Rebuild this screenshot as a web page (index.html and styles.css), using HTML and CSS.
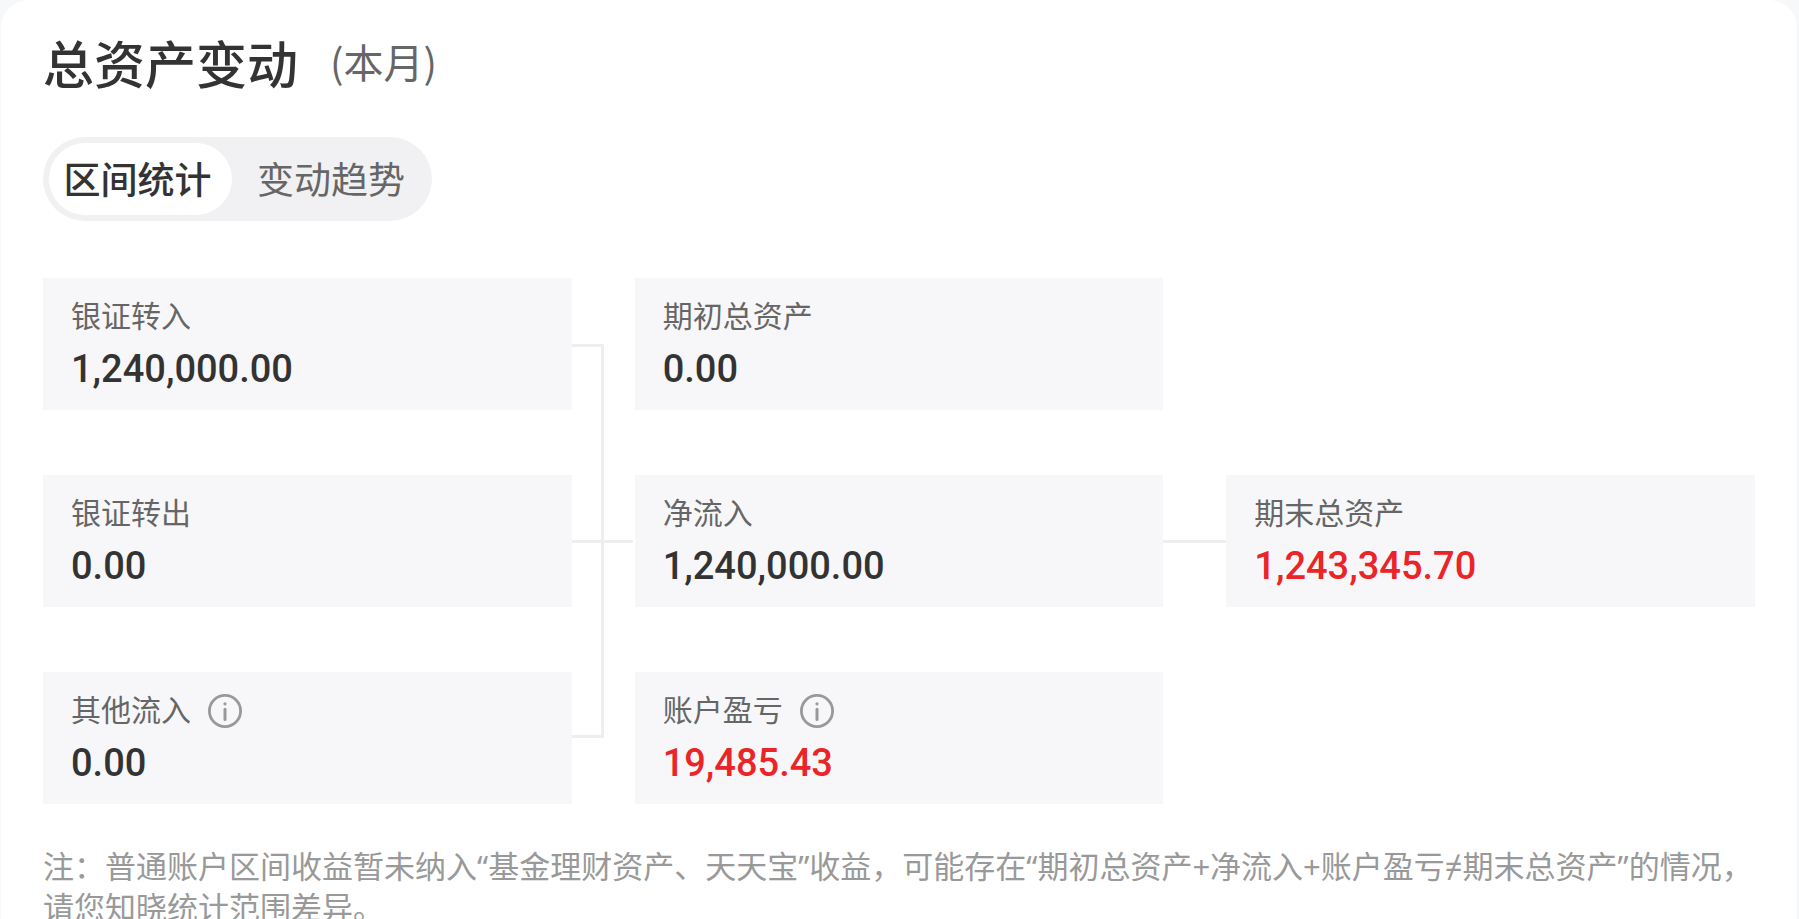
FILE: index.html
```html
<!DOCTYPE html>
<html lang="zh-CN">
<head>
<meta charset="utf-8">
<meta name="viewport" content="width=device-width, initial-scale=1">
<title>总资产变动</title>
<link rel="stylesheet" href="styles.css">
</head>
<body>
<main class="panel">
  <header class="header">
    <h1 class="title">总资产变动</h1>
    <span class="period">(本月)</span>
  </header>

  <div class="tabs" role="tablist">
    <button class="tab tab-active" type="button" role="tab" aria-selected="true">区间统计</button>
    <button class="tab" type="button" role="tab" aria-selected="false">变动趋势</button>
  </div>

  <section class="flow">
    <div class="bracket"></div>
    <div class="link link-in"></div>
    <div class="link link-out"></div>

    <article class="card col-a row-1">
      <h2 class="label">银证转入</h2>
      <p class="value">1,240,000.00</p>
    </article>
    <article class="card col-b row-1">
      <h2 class="label">期初总资产</h2>
      <p class="value">0.00</p>
    </article>
    <article class="card col-a row-2">
      <h2 class="label">银证转出</h2>
      <p class="value">0.00</p>
    </article>
    <article class="card col-b row-2">
      <h2 class="label">净流入</h2>
      <p class="value">1,240,000.00</p>
    </article>
    <article class="card col-c row-2">
      <h2 class="label">期末总资产</h2>
      <p class="value value-up">1,243,345.70</p>
    </article>
    <article class="card col-a row-3">
      <h2 class="label">其他流入
        <button class="info" type="button" aria-label="其他流入说明">
          <svg class="info-icon" viewBox="0 0 34 34" aria-hidden="true"><circle cx="17" cy="17" r="15.6" fill="none" stroke="currentColor" stroke-width="2.8"/><circle cx="17" cy="9.8" r="1.6" fill="currentColor"/><path d="M17 15.2v10.4" fill="none" stroke="currentColor" stroke-width="3" stroke-linecap="round"/></svg>
        </button>
      </h2>
      <p class="value">0.00</p>
    </article>
    <article class="card col-b row-3">
      <h2 class="label">账户盈亏
        <button class="info" type="button" aria-label="账户盈亏说明">
          <svg class="info-icon" viewBox="0 0 34 34" aria-hidden="true"><circle cx="17" cy="17" r="15.6" fill="none" stroke="currentColor" stroke-width="2.8"/><circle cx="17" cy="9.8" r="1.6" fill="currentColor"/><path d="M17 15.2v10.4" fill="none" stroke="currentColor" stroke-width="3" stroke-linecap="round"/></svg>
        </button>
      </h2>
      <p class="value value-up">19,485.43</p>
    </article>
  </section>

  <p class="note">注：普通账户区间收益暂未纳入“基金理财资产、天天宝”收益，可能存在“期初总资产+净流入+账户盈亏≠期末总资产”的情况，请您知晓统计范围差异。</p>
</main>
</body>
</html>
```

FILE: styles.css
```css
* {
  box-sizing: border-box;
}

html {
  background: #f7f8fa;
}

body {
  margin: 0;
  font-family: "Noto Sans CJK SC", sans-serif;
  color: #333;
}

h1,
h2,
p {
  margin: 0;
}

button {
  border: 0;
  padding: 0;
  background: none;
  color: inherit;
  font: inherit;
  cursor: pointer;
}

.panel {
  margin: 0 2px 0 1px;
  padding: 30px 42px;
  border-radius: 28px 28px 0 0;
  background: #fff;
}

.header {
  display: flex;
  align-items: center;
  gap: 32px;
  height: 64px;
}

.title {
  font-size: 51px;
  font-weight: 500;
  line-height: 64px;
}

.period {
  font-size: 40px;
  line-height: 62px;
  padding-bottom: 2px;
  color: #666;
}

.tabs {
  display: inline-flex;
  margin-top: 43px;
  padding: 6px;
  border-radius: 42px;
  background: #f1f1f3;
}

.tab {
  width: 194px;
  height: 72px;
  padding: 0 0 2px 4px;
  border-radius: 36px;
  font-size: 37px;
  line-height: 70px;
  color: #666;
}

.tab-active {
  width: 183px;
  padding: 0 6px 2px 0;
  background: #fff;
  font-weight: 500;
  color: #333;
}

.flow {
  display: grid;
  grid-template-columns: 1fr 63px 1fr 63px 1fr;
  row-gap: 65px;
  margin-top: 57px;
}

.card {
  height: 132px;
  padding: 17px 28px;
  background: #f7f7f9;
}

.col-a { grid-column: 1; }
.col-b { grid-column: 3; }
.col-c { grid-column: 5; }
.row-1 { grid-row: 1; }
.row-2 { grid-row: 2; }
.row-3 { grid-row: 3; }

.label {
  display: flex;
  align-items: center;
  gap: 17px;
  height: 38px;
  font-size: 30px;
  font-weight: 400;
  line-height: 38px;
  color: #666;
}

.info {
  width: 34px;
  height: 34px;
  margin-top: 6px;
  color: #999;
}

.info-icon {
  display: block;
  width: 34px;
  height: 34px;
}

.value {
  margin-top: 12px;
  font-family: Roboto, "Noto Sans CJK SC", sans-serif;
  font-size: 38px;
  font-weight: 500;
  line-height: 48px;
}

.value-up {
  color: #eb2427;
}

.bracket {
  grid-area: 1 / 2 / 4 / 3;
  margin: 66px 31px 66px 0;
  border: solid #eee;
  border-width: 3px 3px 3px 0;
}

.link {
  align-self: center;
  height: 3px;
  background: #eee;
}

.link-in {
  grid-area: 2 / 2;
  margin-right: 2px;
}

.link-out { grid-area: 2 / 4; }

.note {
  margin-top: 42px;
  font-family: "Noto Sans", "Noto Sans CJK SC", sans-serif;
  font-size: 31px;
  line-height: 41px;
  color: #999;
}
```
